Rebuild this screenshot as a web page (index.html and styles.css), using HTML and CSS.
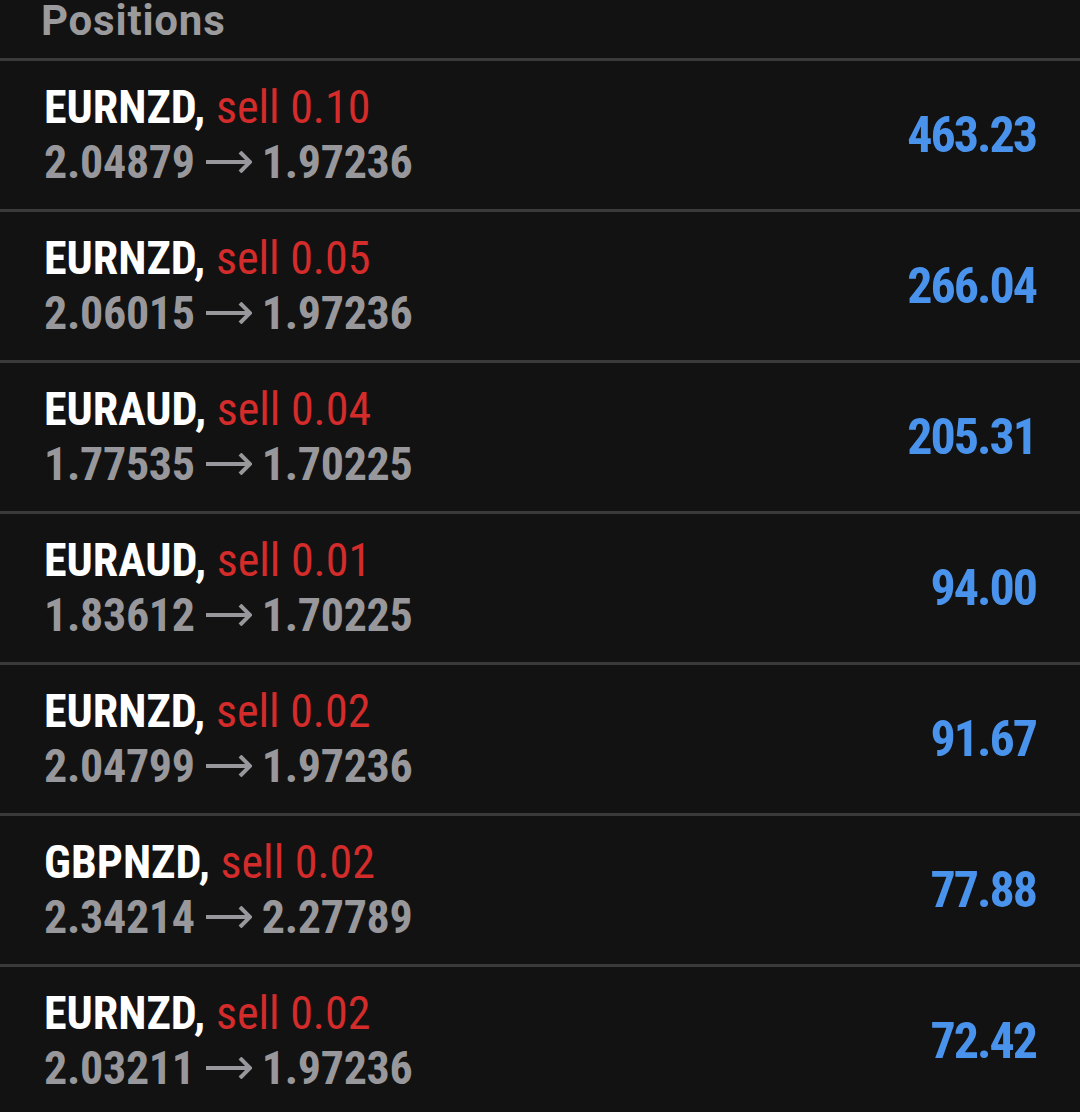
FILE: index.html
```html
<!DOCTYPE html>
<html lang="en">
<head>
  <meta charset="UTF-8" />
  <meta name="viewport" content="width=device-width, initial-scale=1.0" />
  <title>Positions</title>
  <link rel="stylesheet" href="styles.css">
</head>
<body>

<div class="header">Positions</div>

<div class="positions">
  <div class="position">
    <div class="info">
      <div class="title"><span class="symbol">EURNZD,</span> <span class="side">sell 0.10</span></div>
      <div class="prices">2.04879<svg class="arrow" viewBox="0 0 46 22"><path d="M0 11H44M34 1L44 11L34 21"/></svg>1.97236</div>
    </div>
    <div class="profit">463.23</div>
  </div>
  <div class="position">
    <div class="info">
      <div class="title"><span class="symbol">EURNZD,</span> <span class="side">sell 0.05</span></div>
      <div class="prices">2.06015<svg class="arrow" viewBox="0 0 46 22"><path d="M0 11H44M34 1L44 11L34 21"/></svg>1.97236</div>
    </div>
    <div class="profit">266.04</div>
  </div>
  <div class="position">
    <div class="info">
      <div class="title"><span class="symbol">EURAUD,</span> <span class="side">sell 0.04</span></div>
      <div class="prices">1.77535<svg class="arrow" viewBox="0 0 46 22"><path d="M0 11H44M34 1L44 11L34 21"/></svg>1.70225</div>
    </div>
    <div class="profit">205.31</div>
  </div>
  <div class="position">
    <div class="info">
      <div class="title"><span class="symbol">EURAUD,</span> <span class="side">sell 0.01</span></div>
      <div class="prices">1.83612<svg class="arrow" viewBox="0 0 46 22"><path d="M0 11H44M34 1L44 11L34 21"/></svg>1.70225</div>
    </div>
    <div class="profit">94.00</div>
  </div>
  <div class="position">
    <div class="info">
      <div class="title"><span class="symbol">EURNZD,</span> <span class="side">sell 0.02</span></div>
      <div class="prices">2.04799<svg class="arrow" viewBox="0 0 46 22"><path d="M0 11H44M34 1L44 11L34 21"/></svg>1.97236</div>
    </div>
    <div class="profit">91.67</div>
  </div>
  <div class="position">
    <div class="info">
      <div class="title"><span class="symbol">GBPNZD,</span> <span class="side">sell 0.02</span></div>
      <div class="prices">2.34214<svg class="arrow" viewBox="0 0 46 22"><path d="M0 11H44M34 1L44 11L34 21"/></svg>2.27789</div>
    </div>
    <div class="profit">77.88</div>
  </div>
  <div class="position">
    <div class="info">
      <div class="title"><span class="symbol">EURNZD,</span> <span class="side">sell 0.02</span></div>
      <div class="prices">2.03211<svg class="arrow" viewBox="0 0 46 22"><path d="M0 11H44M34 1L44 11L34 21"/></svg>1.97236</div>
    </div>
    <div class="profit">72.42</div>
  </div>
</div>

</body>
</html>
```

FILE: styles.css
```css
body {
  margin: 0;
  background-color: #121212;
  font-family: Roboto, "Liberation Sans", sans-serif;
  overflow: hidden;
}

.header {
  height: 58px;
  padding-left: 41px;
  font-size: 42px;
  line-height: 42px;
  font-weight: 700;
  letter-spacing: 0.8px;
  color: #9b9b9d;
  border-bottom: 3px solid #3a3a3a;
}

.position {
  display: flex;
  align-items: center;
  justify-content: space-between;
  height: 148px;
  padding: 0 44px;
  border-bottom: 3px solid #3a3a3a;
  font-stretch: condensed;
}

.info {
  font-size: 46px;
  line-height: 55px;
}

.symbol {
  color: #ffffff;
  font-weight: 700;
}

.side {
  color: #d42b2b;
}

.prices {
  color: #98989c;
  font-weight: 700;
  letter-spacing: -0.3px;
}

.arrow {
  width: 46px;
  height: 22px;
  margin: 0 10px 0 11px;
  vertical-align: 5px;
  fill: none;
  stroke: #98989c;
  stroke-width: 4;
}

.profit {
  color: #4a93ec;
  font-size: 50px;
  font-weight: 700;
  letter-spacing: -2px;
}
```
